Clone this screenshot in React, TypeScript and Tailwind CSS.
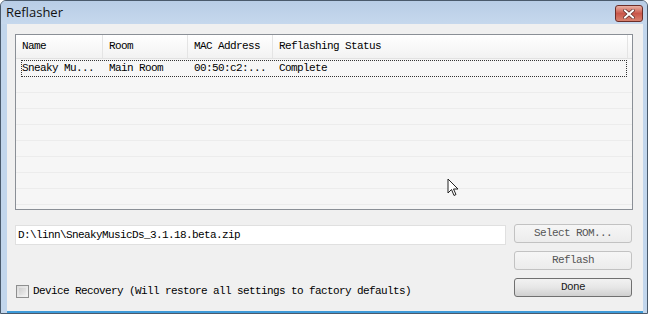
import React from "react";

const mono = { fontFamily: '"Liberation Mono", "DejaVu Sans Mono", monospace' };

const columns = [
  { label: "Name", width: "w-[87px]" },
  { label: "Room", width: "w-[85px]" },
  { label: "MAC Address", width: "w-[85px]" },
  { label: "Reflashing Status", width: "flex-1" },
];

const rows = [["Sneaky Mu...", "Main Room", "00:50:c2:...", "Complete"]];

const Cursor = () => (
  <svg width="13" height="20" viewBox="0 0 13 20" className="absolute left-[440px] top-[154px]">
    <path d="M1 1 L1 15 L4.5 11.5 L7 17.5 L9 16.5 L6.5 11 L11 11 Z" fill="white" stroke="#222" strokeWidth="1" strokeLinejoin="round" />
  </svg>
);

const Button = ({ label, primary }: { label: string; primary?: boolean }) => (
  <div
    className={`h-[19px] w-[118px] flex items-center justify-center rounded-[3px] border text-[11px] tracking-[-0.6px] ${
      primary
        ? "border-[#707070] bg-gradient-to-b from-[#f2f2f2] via-[#e6e6e6] to-[#d0d0d0] text-[#1a1a1a]"
        : "border-[#c2c2c2] bg-gradient-to-b from-[#f6f6f6] to-[#ececec] text-[#555]"
    }`}
    style={mono}
  >
    {label}
  </div>
);

export default function App() {
  return (
    <div className="w-[648px] h-[314px] flex flex-col bg-[#c2d6ec] border border-[#4a5a6c] rounded-t-[6px] overflow-hidden">
      {/* title bar */}
      <div className="h-[23px] flex items-center justify-between pl-[5px] pr-[4px] bg-gradient-to-b from-[#b8cde6] to-[#c6d8ed]">
        <span className="text-[13px] text-[#111] pt-[1px]" style={{ fontFamily: '"Open Sans", "Liberation Sans", sans-serif' }}>
          Reflasher
        </span>
        <div className="w-[28px] h-[17px] mt-[2px] rounded-[3px] border border-[#6b2d28] bg-gradient-to-b from-[#e8b0a4] via-[#c9564a] to-[#d8826f] flex items-center justify-center">
          <svg width="12" height="10" viewBox="0 0 12 10">
            <path d="M2 1.5 L10 8.5 M10 1.5 L2 8.5" stroke="#5a2a26" strokeWidth="3.4" strokeLinecap="square" />
            <path d="M2 1.5 L10 8.5 M10 1.5 L2 8.5" stroke="white" strokeWidth="2" strokeLinecap="square" />
          </svg>
        </div>
      </div>

      {/* client area */}
      <div className="relative flex-1 ml-[6px] mr-[4px] bg-[#f0f0f0] border-b-[2px] border-[#3d9ad8] flex flex-col pl-[8px] pr-[10px] pt-[10px]">
        {/* list view */}
        <div className="h-[176px] border border-[#8a8f96] bg-[#f6f6f6] flex flex-col overflow-hidden" style={mono}>
          <div className="h-[24px] flex border-b border-[#e2e2e2] bg-gradient-to-b from-white to-[#f2f2f2] text-[11px] tracking-[-0.6px] text-black">
            {columns.map((c) => (
              <div key={c.label} className={`${c.width} flex items-center pl-[6px] border-r border-[#e4e4e4]`}>
                {c.label}
              </div>
            ))}
            <div className="w-[4px]" />
          </div>
          <div className="flex-1 flex flex-col">
            {rows.map((r, i) => (
              <div key={i} className="h-[17px] flex mx-[5px] mt-[1px] border border-dotted border-[#333] text-[11px] tracking-[-0.6px] text-black">
                <div className="w-[86px] flex items-center">{r[0]}</div>
                <div className="w-[85px] flex items-center pl-[1px]">{r[1]}</div>
                <div className="w-[85px] flex items-center pl-[1px]">{r[2]}</div>
                <div className="flex-1 flex items-center pl-[1px]">{r[3]}</div>
              </div>
            ))}
            {Array.from({ length: 8 }).map((_, i) => (
              <div key={i} className="h-[16px] border-b border-[#ececec]" />
            ))}
          </div>
        </div>

        {/* bottom area */}
        <div className="flex mt-[14px]">
          <div className="flex-1 flex flex-col">
            <div
              className="mt-[1px] h-[20px] w-[491px] bg-white border border-[#e0e0e0] flex items-center pl-[2px] text-[11px] tracking-[-0.6px] text-black"
              style={mono}
            >
              D:\linn\SneakyMusicDs_3.1.18.beta.zip
            </div>
            <div className="mt-[38px] ml-[1px] flex items-center gap-[4px]">
              <div className="w-[13px] h-[13px] border border-[#8e8f8f] bg-gradient-to-br from-[#dcdcdc] to-[#f4f4f4] p-[2px]">
                <div className="w-full h-full bg-gradient-to-br from-[#cfcfcf] to-[#ededed]" />
              </div>
              <span className="text-[11px] tracking-[-0.6px] text-black" style={mono}>
                Device Recovery (Will restore all settings to factory defaults)
              </span>
            </div>
          </div>
          <div className="flex flex-col gap-[8px] mr-[1px]">
            <Button label="Select ROM..." />
            <Button label="Reflash" />
            <Button label="Done" primary />
          </div>
        </div>
        <Cursor />
      </div>
    </div>
  );
}
